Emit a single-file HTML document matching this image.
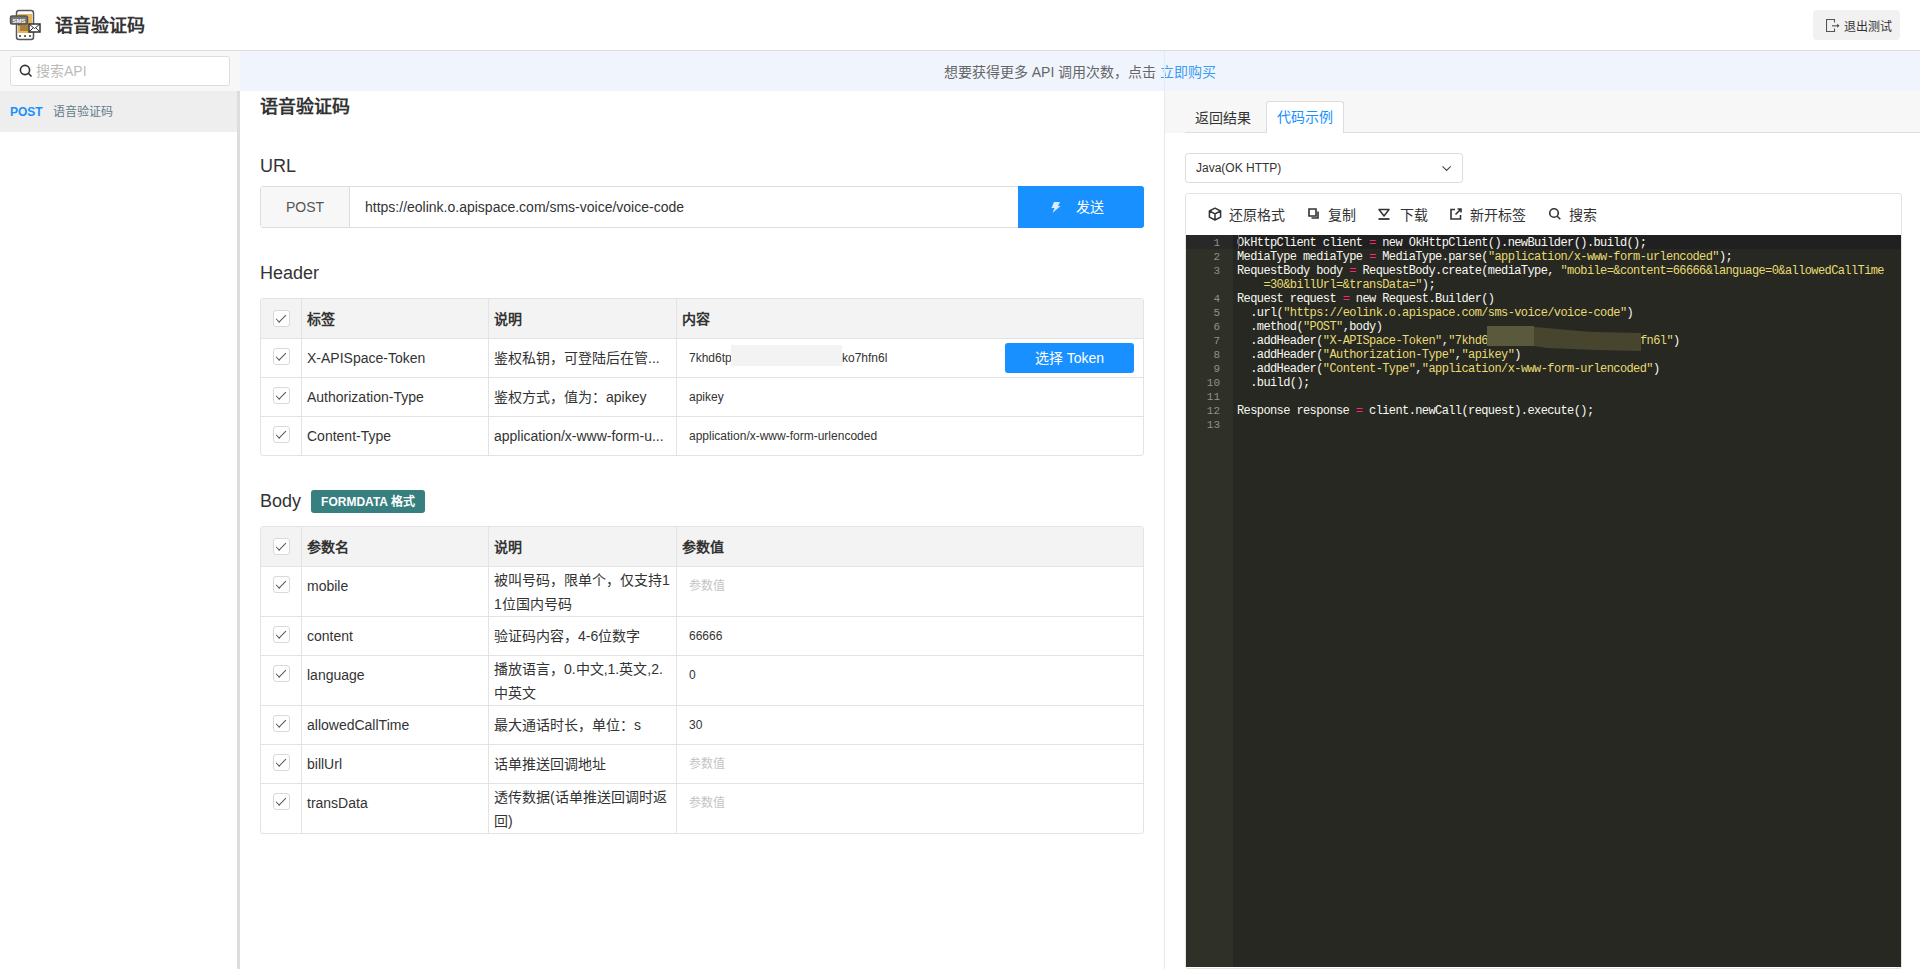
<!DOCTYPE html>
<html lang="zh-CN"><head><meta charset="utf-8">
<style>
*{box-sizing:border-box;margin:0;padding:0}
html,body{width:1920px;height:969px;overflow:hidden;background:#fff;font-family:"Liberation Sans",sans-serif;color:#333;font-size:14px}
.abs{position:absolute}
#hdr{left:0;top:0;width:1920px;height:51px;border-bottom:1px solid #ddd;background:#fff}
#ttl{left:55px;top:13px;font-size:18px;font-weight:bold;color:#333;line-height:26px}
#exit{left:1813px;top:10px;width:87px;height:30px;background:#f1f1f1;border-radius:4px}
#exit span{position:absolute;left:31px;top:10px;font-size:12px;line-height:14px;color:#333}
#side{left:0;top:51px;width:240px;height:918px;background:#fff}
#sidetop{left:0;top:51px;width:240px;height:40px;background:#f7f7f7}
#search{left:10px;top:56px;width:220px;height:30px;background:#fff;border:1px solid #ddd;border-radius:3px}
#search span{position:absolute;left:25px;top:6px;color:#bbb;font-size:14px;line-height:16px}
#sel{left:0;top:91px;width:237px;height:41px;background:#eee}
#sel b{position:absolute;left:10px;top:14px;color:#1890ff;font-size:12px;line-height:14px}
#sel span{position:absolute;left:53px;top:14px;color:#5f7d8a;font-size:12px;line-height:14px}
#sbar{left:237px;top:91px;width:3px;height:878px;background:#ddd}
#notice{left:240px;top:51px;width:1680px;height:40px;background:#f0f5fd;text-align:center;line-height:42px;color:#666;font-size:14px}
#notice a{color:#3a9cf5;text-decoration:none}

.sec{position:absolute;left:260px;font-size:18px;line-height:22px;color:#333}
#mttl{left:260px;top:94.5px;font-size:18px;font-weight:bold;line-height:24px;color:#333}
#urlg{left:260px;top:186px;width:884px;height:42px;border:1px solid #ddd;border-radius:3px;background:#fff}
#urlpost{left:0;top:0;width:89px;height:40px;background:#f7f7f7;border-right:1px solid #ddd;text-align:center;line-height:40px;font-size:14px;color:#555}
#urltxt{left:104px;top:0;line-height:40px;font-size:14px;color:#333}
#send{left:1018px;top:186px;width:126px;height:42px;background:#1890ff;border-radius:0 3px 3px 0;color:#fff}
#send span{position:absolute;left:58px;top:13px;font-size:14px;line-height:16px}
.tbl{position:absolute;left:260px;width:884px;border:1px solid #e3e3e3;border-radius:3px;background:#fff;overflow:hidden}
.th{position:absolute;left:0;width:882px;background:#f3f3f3}
.hl{position:absolute;left:0;width:882px;height:1px;background:#e3e3e3}
.vl{position:absolute;top:0;width:1px;bottom:0;background:#e3e3e3}
.cb{position:absolute;left:12px;width:17px;height:17px;border:1px solid #d9d9d9;border-radius:3px;background:#fff}
.cb:after{content:"";position:absolute;left:1.5px;top:3.7px;width:8.5px;height:4px;border-left:1.5px solid #555;border-bottom:1.5px solid #555;transform:rotate(-45deg)}
.t{position:absolute;white-space:nowrap;font-size:14px;line-height:16px;color:#333}
.tb{font-weight:bold}
.s12{font-size:12px;line-height:14px}
.ph{color:#c4c4c4}
.d2{position:absolute;font-size:14px;line-height:24px;color:#333;white-space:nowrap}
#tokbtn{left:744px;top:44px;width:129px;height:30px;background:#1890ff;border-radius:3px;color:#fff;text-align:center;line-height:30px;font-size:14px}
#badge{left:311px;top:490px;width:114px;height:23px;background:#387f80;border-radius:3px;color:#fff;font-size:12px;font-weight:bold;text-align:center;line-height:25px}
#vdiv{left:1164px;top:91px;width:1px;height:878px;background:#e8e8e8}

#tabs{left:1165px;top:91px;width:755px;height:42px;background:#f7f7f7}
#tabline{left:1185px;top:132px;width:735px;height:1px;background:#ddd}
#tab1{left:1195px;top:110px;font-size:14px;line-height:16px;color:#333}
#tab2{left:1266px;top:101px;width:78px;height:32px;background:#fff;border:1px solid #ddd;border-bottom:none;border-radius:3px 3px 0 0}
#tab2 span{position:absolute;left:10px;top:7px;font-size:14px;line-height:16px;color:#1890ff}
#langsel{left:1185px;top:153px;width:278px;height:30px;border:1px solid #ddd;border-radius:3px;background:#fff}
#langsel span{position:absolute;left:10px;top:7px;font-size:12px;line-height:14px;color:#333}
#codebox{left:1185px;top:193px;width:717px;height:776px;border:1px solid #e3e3e3;border-radius:3px;background:#fff}
.tbi{position:absolute;top:208px;font-size:14px;line-height:14px;color:#333}
#code{left:1186px;top:235px;width:715px;height:732px;background:#272822;overflow:hidden}
#gut{left:0;top:0;width:47px;height:732px;background:#2f3129}
#act{left:0;top:0;width:715px;height:14px;background:#202020}
.ln{position:absolute;left:0;width:34px;padding-top:1px;text-align:right;font-family:"Liberation Mono",monospace;font-size:11px;line-height:14px;color:#8f908a}
.cl{position:absolute;left:51px;padding-top:1px;white-space:pre;font-family:"Liberation Mono",monospace;font-size:12px;letter-spacing:-0.6px;line-height:14px;color:#f8f8f2}
.s{color:#e6db74}.o{color:#f92672}
</style></head><body>
<div id="hdr" class="abs"></div>
<svg class="abs" style="left:9px;top:9px" width="32" height="32" viewBox="0 0 32 32">
 <rect x="7.5" y="1.5" width="17" height="29" rx="2.5" fill="#fff" stroke="#555" stroke-width="1.5"/>
 <rect x="9" y="5" width="14" height="19" fill="#e8b65a"/>
 <rect x="11" y="14" width="8" height="8" fill="#a8803a"/>
 <circle cx="11" cy="27" r="1" fill="#333"/><circle cx="16" cy="27" r="1" fill="#333"/><circle cx="21" cy="27" r="1" fill="#333"/>
 <rect x="1.5" y="7" width="17" height="8" rx="1.5" fill="#777" stroke="#555" stroke-width="1.5"/><path d="M8 15L10 17L12 15Z" fill="#555"/>
 <text x="10" y="13.5" font-size="6" font-family="Liberation Sans" text-anchor="middle" fill="#fff" font-weight="bold">SMS</text>
 <rect x="20" y="15" width="11" height="8" fill="#fff" stroke="#333" stroke-width="1.5"/>
 <path d="M20 15 L25.5 19.5 L31 15 M20 23 L24 19 M31 23 L27 19" stroke="#333" stroke-width="1" fill="none"/>
</svg>
<div id="ttl" class="abs">语音验证码</div>
<div id="exit" class="abs">
 <svg class="abs" style="left:13px;top:9px" width="14" height="14" viewBox="0 0 14 14"><path d="M8.5 3.5V0.5H0.5V12.5H8.5V9.5" stroke="#555" stroke-width="1.1" fill="none"/><path d="M6 6.8H11.5" stroke="#666" stroke-width="1.3"/><path d="M11.2 4.8L13.5 6.8L11.2 8.8Z" fill="#444"/></svg>
 <span>退出测试</span>
</div>
<div id="side" class="abs"></div>
<div id="sidetop" class="abs"></div>
<div id="search" class="abs">
 <svg class="abs" style="left:8px;top:7px" width="14" height="14" viewBox="0 0 14 14"><circle cx="6" cy="6" r="4.6" stroke="#333" stroke-width="1.6" fill="none"/><path d="M9.3 9.3L12.5 12.5" stroke="#333" stroke-width="1.6"/></svg>
 <span>搜索API</span>
</div>
<div id="sel" class="abs"><b>POST</b><span>语音验证码</span></div>
<div id="sbar" class="abs"></div>
<div id="notice" class="abs">想要获得更多 API 调用次数，点击 <a>立即购买</a></div>

<div id="vdiv" class="abs"></div><div class="abs" style="left:1164px;top:51px;width:1px;height:40px;background:#e4ebf6"></div>
<div id="mttl" class="abs">语音验证码</div>
<div class="sec" style="top:155px">URL</div>
<div id="urlg" class="abs"><div id="urlpost" class="abs">POST</div><div id="urltxt" class="abs">https://eolink.o.apispace.com/sms-voice/voice-code</div></div>
<div id="send" class="abs"><svg class="abs" style="left:33px;top:16px" width="10" height="11" viewBox="0 0 10 11"><path d="M3 0H9L7 4H9.5L1.5 11L3.5 6H0.5Z" fill="#d8ecff"/></svg><span>发送</span></div>
<div class="sec" style="top:262px">Header</div>
<div class="tbl" style="top:298px;height:158px">
<div class="th" style="top:0;height:40px"></div>
<div class="hl" style="top:39px"></div>
<div class="hl" style="top:78px"></div>
<div class="hl" style="top:117px"></div>
<div class="vl" style="left:40px"></div>
<div class="vl" style="left:227px"></div>
<div class="vl" style="left:415px"></div>
<div class="cb" style="top:11px"></div>
<div class="t tb" style="left:46px;top:12px">标签</div>
<div class="t tb" style="left:233px;top:12px">说明</div>
<div class="t tb" style="left:421px;top:12px">内容</div>
<div class="cb" style="top:49px"></div>
<div class="t" style="left:46px;top:51px">X-APISpace-Token</div>
<div class="t" style="left:233px;top:51px">鉴权私钥，可登陆后在管...</div>
<div class="t s12" style="left:428px;top:52px">7khd6tp</div>
<div class="cb" style="top:88px"></div>
<div class="t" style="left:46px;top:90px">Authorization-Type</div>
<div class="t" style="left:233px;top:90px">鉴权方式，值为：apikey</div>
<div class="t s12" style="left:428px;top:91px">apikey</div>
<div class="cb" style="top:127px"></div>
<div class="t" style="left:46px;top:129px">Content-Type</div>
<div class="t" style="left:233px;top:129px">application/x-www-form-u...</div>
<div class="t s12" style="left:428px;top:130px">application/x-www-form-urlencoded</div>
<div class="t s12" style="left:581px;top:52px">ko7hfn6l</div>
<div class="abs" style="left:470px;top:46px;width:111px;height:21px;background:#f3f3f3"></div>
<div id="tokbtn" class="abs">选择 Token</div>
</div>
<div class="sec" style="top:490px">Body</div>
<div id="badge" class="abs">FORMDATA 格式</div>
<div class="tbl" style="top:526px;height:308px">
<div class="th" style="top:0;height:40px"></div>
<div class="vl" style="left:40px"></div>
<div class="vl" style="left:227px"></div>
<div class="vl" style="left:415px"></div>
<div class="cb" style="top:11px"></div>
<div class="t tb" style="left:46px;top:12px">参数名</div>
<div class="t tb" style="left:233px;top:12px">说明</div>
<div class="t tb" style="left:421px;top:12px">参数值</div>
<div class="hl" style="top:39px"></div>
<div class="cb" style="top:49px"></div>
<div class="t" style="left:46px;top:51px">mobile</div>
<div class="d2" style="left:233px;top:41px">被叫号码，限单个，仅支持1<br>1位国内号码</div>
<div class="t s12 ph" style="left:428px;top:52px">参数值</div>
<div class="hl" style="top:89px"></div>
<div class="cb" style="top:99px"></div>
<div class="t" style="left:46px;top:101px">content</div>
<div class="t" style="left:233px;top:101px">验证码内容，4-6位数字</div>
<div class="t s12" style="left:428px;top:102px">66666</div>
<div class="hl" style="top:128px"></div>
<div class="cb" style="top:138px"></div>
<div class="t" style="left:46px;top:140px">language</div>
<div class="d2" style="left:233px;top:130px">播放语言，0.中文,1.英文,2.<br>中英文</div>
<div class="t s12" style="left:428px;top:141px">0</div>
<div class="hl" style="top:178px"></div>
<div class="cb" style="top:188px"></div>
<div class="t" style="left:46px;top:190px">allowedCallTime</div>
<div class="t" style="left:233px;top:190px">最大通话时长，单位：s</div>
<div class="t s12" style="left:428px;top:191px">30</div>
<div class="hl" style="top:217px"></div>
<div class="cb" style="top:227px"></div>
<div class="t" style="left:46px;top:229px">billUrl</div>
<div class="t" style="left:233px;top:229px">话单推送回调地址</div>
<div class="t s12 ph" style="left:428px;top:230px">参数值</div>
<div class="hl" style="top:256px"></div>
<div class="cb" style="top:266px"></div>
<div class="t" style="left:46px;top:268px">transData</div>
<div class="d2" style="left:233px;top:258px">透传数据(话单推送回调时返<br>回)</div>
<div class="t s12 ph" style="left:428px;top:269px">参数值</div>
</div>

<div id="tabs" class="abs"></div>
<div id="tabline" class="abs"></div>
<div id="tab1" class="abs">返回结果</div>
<div id="tab2" class="abs"><span>代码示例</span></div>
<div id="langsel" class="abs"><span>Java(OK HTTP)</span>
<svg class="abs" style="left:255px;top:9px" width="12" height="10" viewBox="0 0 12 10"><path d="M1.5 3.3L5.6 7.4L9.7 3.3" stroke="#444" stroke-width="1.1" fill="none"/></svg></div>
<div id="codebox" class="abs"></div>
<svg class="abs" style="left:1208px;top:207px" width="14" height="14" viewBox="0 0 14 14"><path d="M7 1.2L12.6 4V10.2L7 13L1.4 10.2V4Z M1.4 4L7 6.8L12.6 4 M7 6.8V13" stroke="#333" stroke-width="1.5" fill="none" stroke-linejoin="round"/></svg>
<div class="tbi" style="left:1229px">还原格式</div>
<svg class="abs" style="left:1307px;top:207px" width="14" height="14" viewBox="0 0 14 14"><path d="M2 2H9V9H2Z" stroke="#333" stroke-width="1.6" fill="none"/><path d="M11 4.5V11H4.5" stroke="#333" stroke-width="1.6" fill="none"/></svg>
<div class="tbi" style="left:1328px">复制</div>
<svg class="abs" style="left:1377px;top:207px" width="14" height="14" viewBox="0 0 14 14"><path d="M2 2.5H12L7 9Z" stroke="#333" stroke-width="1.5" fill="none" stroke-linejoin="round"/><path d="M1.5 12H12.5" stroke="#333" stroke-width="1.8"/></svg>
<div class="tbi" style="left:1400px">下载</div>
<svg class="abs" style="left:1449px;top:207px" width="14" height="14" viewBox="0 0 14 14"><path d="M6 2.5H2V12H11.5V8" stroke="#333" stroke-width="1.6" fill="none"/><path d="M6.5 7.5L12 2M8.5 2H12V5.5" stroke="#333" stroke-width="1.6" fill="none"/></svg>
<div class="tbi" style="left:1470px">新开标签</div>
<svg class="abs" style="left:1548px;top:207px" width="14" height="14" viewBox="0 0 14 14"><circle cx="6" cy="6" r="4.3" stroke="#333" stroke-width="1.6" fill="none"/><path d="M9.2 9.2L12.3 12.3" stroke="#333" stroke-width="1.6"/></svg>
<div class="tbi" style="left:1569px">搜索</div>
<div id="code" class="abs"><div id="gut" class="abs"></div><div id="act" class="abs"></div><div class="abs" style="left:0;top:0;width:47px;height:14px;background:#282828"></div>
<div class="ln" style="top:0px">1</div>
<div class="cl" style="top:0px">OkHttpClient client <span class="o">=</span> new OkHttpClient().newBuilder().build();</div>
<div class="ln" style="top:14px">2</div>
<div class="cl" style="top:14px">MediaType mediaType <span class="o">=</span> MediaType.parse(<span class="s">&quot;application/x-www-form-urlencoded&quot;</span>);</div>
<div class="ln" style="top:28px">3</div>
<div class="cl" style="top:28px">RequestBody body <span class="o">=</span> RequestBody.create(mediaType, <span class="s">&quot;mobile=&amp;content=66666&amp;language=0&amp;allowedCallTime</span></div>
<div class="cl" style="top:42px">    <span class="s">=30&amp;billUrl=&amp;transData=&quot;</span>);</div>
<div class="ln" style="top:56px">4</div>
<div class="cl" style="top:56px">Request request <span class="o">=</span> new Request.Builder()</div>
<div class="ln" style="top:70px">5</div>
<div class="cl" style="top:70px">  .url(<span class="s">&quot;https://eolink.o.apispace.com/sms-voice/voice-code&quot;</span>)</div>
<div class="ln" style="top:84px">6</div>
<div class="cl" style="top:84px">  .method(<span class="s">&quot;POST&quot;</span>,body)</div>
<div class="ln" style="top:98px">7</div>
<div class="cl" style="top:98px">  .addHeader(<span class="s">&quot;X-APISpace-Token&quot;</span>,<span class="s">&quot;7khd6</span></div>
<div class="ln" style="top:112px">8</div>
<div class="cl" style="top:112px">  .addHeader(<span class="s">&quot;Authorization-Type&quot;</span>,<span class="s">&quot;apikey&quot;</span>)</div>
<div class="ln" style="top:126px">9</div>
<div class="cl" style="top:126px">  .addHeader(<span class="s">&quot;Content-Type&quot;</span>,<span class="s">&quot;application/x-www-form-urlencoded&quot;</span>)</div>
<div class="ln" style="top:140px">10</div>
<div class="cl" style="top:140px">  .build();</div>
<div class="ln" style="top:154px">11</div>
<div class="cl" style="top:154px"></div>
<div class="ln" style="top:168px">12</div>
<div class="cl" style="top:168px">Response response <span class="o">=</span> client.newCall(request).execute();</div>
<div class="ln" style="top:182px">13</div>
<div class="cl" style="top:182px"></div>
<div class="cl" style="top:98px;left:454px"><span class="s">fn6l&quot;</span>)</div>
<svg class="abs" style="left:301px;top:90px" width="154" height="26"><polygon points="0,1 47,1 47,2 60,3 80,5 106,7 154,8 154,26 110,25 60,23 47,21 0,21" fill="#48452e"/><polygon points="0,1 47,1 47,21 0,21" fill="#5b593b"/></svg>
<div class="abs" style="left:52px;top:0;width:1px;height:14px;background:#6a6a6a"></div>
</div>
</body></html>
